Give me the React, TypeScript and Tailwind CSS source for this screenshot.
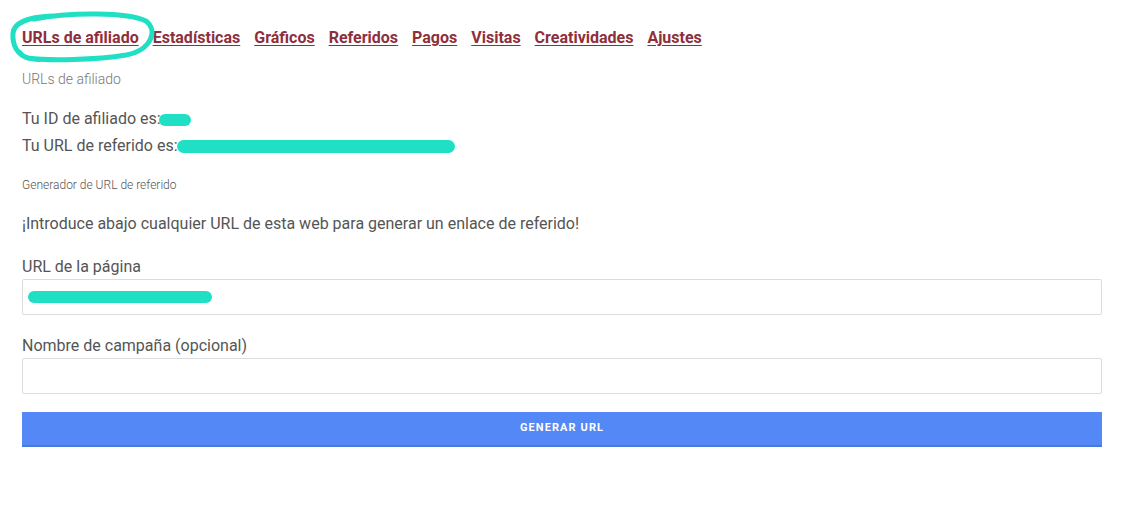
import type { ReactNode } from "react";

const tabs = [
  "URLs de afiliado",
  "Estadísticas",
  "Gráficos",
  "Referidos",
  "Pagos",
  "Visitas",
  "Creatividades",
  "Ajustes",
];

// teal marker blob used to hide private data in the screenshot
function Blob({ className }: { className: string }) {
  return <span className={`inline-block align-middle rounded-full bg-[#1fe0c4] ${className}`} />;
}

function Field({ label, children }: { label: string; children?: ReactNode }) {
  return (
    <div className="flex flex-col">
      <label className="text-[16px] leading-[24px] text-[#555]">{label}</label>
      <div className="h-[36px] w-full rounded-[2px] border border-[#dcdcdc] bg-white flex items-center px-[6px]">
        {children}
      </div>
    </div>
  );
}

export default function App() {
  return (
    <div className="min-h-[507px] w-[1139px] bg-white font-['Roboto',sans-serif] text-[#555]">
      <div className="relative w-[1080px] ml-[22px] pt-[27px]">
        <svg
          className="absolute left-[-22px] top-0 pointer-events-none"
          width="180"
          height="70"
          viewBox="0 0 180 70"
          fill="none"
        >
          <path
            d="M 34 19 C 70 12, 128 12, 146 21 C 158 30, 152 50, 126 55 C 96 60, 48 61, 28 58 C 18 55, 12 46, 13 33 C 14 23, 28 17, 52 16"
            stroke="#20dfc3"
            strokeWidth="5"
            strokeLinecap="round"
          />
          <path d="M 20 52 C 24 58, 30 60, 40 60" stroke="#20dfc3" strokeWidth="4" strokeLinecap="round" />
        </svg>

        <nav className="flex gap-x-[14px] text-[16px] leading-[22px] font-bold">
          {tabs.map((t) => (
            <a key={t} href="#" className="text-[#8e2f3c] underline underline-offset-[2px]">
              {t}
            </a>
          ))}
        </nav>

        <p className="mt-[20px] text-[14px] leading-[20px] font-light text-[#777]">URLs de afiliado</p>

        <div className="mt-[16px] text-[16px] leading-[27px]">
          <p>
            Tu ID de afiliado es:<Blob className="w-[32px] h-[12px] -ml-[2px]" />
          </p>
          <p>
            Tu URL de referido es:<Blob className="w-[278px] h-[13px] -ml-[1px]" />
          </p>
        </div>

        <p className="mt-[17px] text-[12px] leading-[18px] font-light text-[#555]">Generador de URL de referido</p>

        <p className="mt-[18px] text-[16px] leading-[24px]">
          ¡Introduce abajo cualquier URL de esta web para generar un enlace de referido!
        </p>

        <div className="mt-[19px] flex flex-col gap-[19px]">
          <Field label="URL de la página">
            <Blob className="w-[184px] h-[12px] -ml-[1px]" />
          </Field>
          <Field label="Nombre de campaña (opcional)" />
        </div>

        <button className="mt-[18px] h-[35px] w-full bg-[#5388f6] border-b-2 border-[#4a79d9] text-white text-[11px] font-bold tracking-[0.1em] uppercase">
          Generar URL
        </button>
      </div>
    </div>
  );
}
